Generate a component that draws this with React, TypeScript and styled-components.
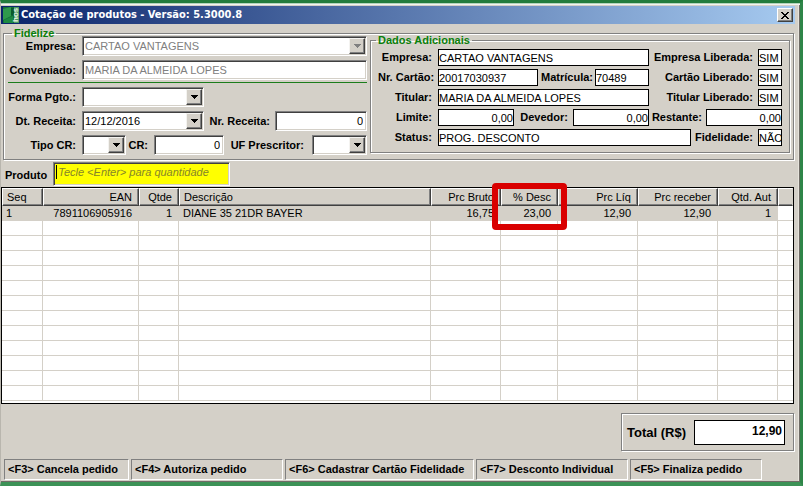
import React from "react";
import styled, { createGlobalStyle, css } from "styled-components";

const face = "#d4d0c8";
const sans = `"Liberation Sans", Arial, sans-serif`;

const GlobalStyle = createGlobalStyle`
  * { box-sizing: border-box; }
  body { margin: 0; background: ${face}; font: 11px/13px ${sans}; color: #000; }
  input, select, button { font: inherit; color: inherit; margin: 0; border-radius: 0; }
`;

const Window = styled.main`
  display: flex;
  flex-direction: column;
  min-height: 100vh;
  background: ${face};
  border-style: solid;
  border-width: 3px 3px 4px 1px;
  border-color: #237c3d #2e8548 #3c9256 #b9b6ae;
  box-shadow: inset 0 1px #b5d5bd, inset 0 2px #f4f3ee, inset -1px -1px #6f6c66, inset -2px 0 #e6e3dc;
  padding: 3px 5px 2px 0;
`;

const TitleBar = styled.header`
  display: flex;
  align-items: center;
  gap: 2px;
  height: 18px;
  padding: 0 2px;
  background: linear-gradient(to right, #0a246a, #a6caf0);
  color: #fff;
`;

const Title = styled.h1`
  flex: 1;
  margin: 0;
  font: bold 11px/14px "DejaVu Sans Condensed", "DejaVu Sans", sans-serif;
`;

const CloseButton = styled.button`
  display: grid;
  place-items: center;
  width: 16px;
  height: 14px;
  padding: 0;
  color: #000;
  background: ${face};
  border: 1px solid;
  border-color: #fff #404040 #404040 #fff;
  box-shadow: inset -1px -1px #808080;
`;

const etched = css`
  border: 1px solid #808080;
  box-shadow: inset 1px 1px #fff, 1px 1px #fff;
`;

const Group = styled.fieldset`
  min-width: 0;
  margin: 0;
  ${etched}
`;

const OuterGroup = styled(Group)`
  display: flex;
  align-items: flex-start;
  gap: 3px;
  margin: 8px 1px 0 2px;
  padding: 2px 3px 4px 4px;
`;

const Legend = styled.legend<{ $left?: number }>`
  height: 2px;
  margin-left: ${(p) => p.$left ?? 4}px;
  padding: 0 2px;
  line-height: 2px;
  font-weight: bold;
  color: #0a800a;
  background: ${face};
`;

const Client = styled.div`
  flex: 0 0 359px;
  width: 359px;
  min-width: 0;
`;

const Row = styled.div<{ $tight?: boolean }>`
  display: flex;
  align-items: center;
  margin-bottom: ${(p) => (p.$tight ? 3 : 4)}px;
  &:last-child { margin-bottom: 0; }
`;

const Rule = styled.hr`
  margin: -2px 0 4px;
  border: 0;
  border-top: 1px solid #1b7d1b;
`;

const Label = styled.label<{ $w: number; $gap?: number }>`
  flex: 0 0 auto;
  width: ${(p) => p.$w}px;
  margin-right: ${(p) => p.$gap ?? 6}px;
  text-align: right;
  font-weight: bold;
  white-space: nowrap;
`;

const size = css<{ $w?: number }>`
  ${(p) => (p.$w ? `flex: 0 0 ${p.$w}px; width: ${p.$w}px;` : "flex: 1 1 0; width: 0;")}
  min-width: 0;
`;

const sunken = css`
  background: #fff;
  border: 1px solid;
  border-color: #808080 #fff #fff #808080;
  box-shadow: inset 1px 1px #404040, inset -1px -1px ${face};
`;

const Field = styled.input<{ $w?: number; $right?: boolean }>`
  ${size}
  ${sunken}
  height: 20px;
  padding: 0 3px 1px 2px;
  text-align: ${(p) => (p.$right ? "right" : "left")};
  &:disabled { color: #808080; }
`;

const FlatField = styled.input<{ $w?: number; $right?: boolean }>`
  ${size}
  height: 17px;
  padding: 0;
  background: #fff;
  border: 1px solid #000;
  text-align: ${(p) => (p.$right ? "right" : "left")};
`;

const Combo = styled.span<{ $w?: number }>`
  ${size}
  ${sunken}
  position: relative;
  height: 20px;
`;

const ComboSelect = styled.select`
  appearance: none;
  display: block;
  width: 100%;
  height: 18px;
  padding: 0 18px 0 2px;
  background: transparent;
  border: 0;
  &:disabled { color: #808080; opacity: 1; }
`;

const ComboArrow = styled.span<{ $off?: boolean }>`
  position: absolute;
  top: 1px;
  right: 1px;
  bottom: 1px;
  display: grid;
  place-items: center;
  width: 16px;
  color: ${(p) => (p.$off ? "#808080" : "#000")};
  background: ${face};
  border: 1px solid;
  border-color: #f4f3f0 #404040 #404040 #f4f3f0;
  box-shadow: inset -1px -1px #808080;
  pointer-events: none;
`;

const Extra = styled(Group)`
  flex: 1;
  margin-top: 3px;
  padding: 8px 7px 6px;
`;

const ProductRow = styled.div`
  display: flex;
  align-items: center;
  gap: 6px;
  padding: 2px 4px 1px;
`;

const ProductLabel = styled.label`
  padding-top: 2px;
  font-weight: bold;
`;

const ProductBox = styled.span`
  position: relative;
  width: 177px;
  &::before {
    content: "";
    position: absolute;
    left: 3px;
    top: 3px;
    width: 1px;
    height: 14px;
    background: #000;
  }
`;

const ProductInput = styled.input`
  ${sunken}
  display: block;
  width: 100%;
  height: 24px;
  padding: 0 4px 5px;
  background: #ff0;
  &::placeholder { color: #85852a; font-style: italic; opacity: 1; }
`;

const GridFrame = styled.div`
  margin-right: 1px;
  padding-bottom: 2px;
  background: #fff;
  border: 1px solid #000;
`;

const Table = styled.table`
  width: 100%;
  table-layout: fixed;
  border-collapse: separate;
  border-spacing: 0;
`;

const Col = styled.col<{ $w?: number }>`
  ${(p) => (p.$w ? `width: ${p.$w}px;` : "")}
`;

const Th = styled.th<{ $left?: boolean }>`
  position: relative;
  height: 18px;
  padding: 0 6px 0 4px;
  text-align: ${(p) => (p.$left ? "left" : "right")};
  font-weight: normal;
  white-space: nowrap;
  background: ${face};
  border: 1px solid;
  border-color: #fff #404040 #404040 #fff;
  box-shadow: inset -1px -1px #808080;
  &:last-child { border-right-color: ${face}; box-shadow: inset 0 -1px #808080; }
`;

const Td = styled.td<{ $left?: boolean }>`
  height: 15px;
  padding: 1px 6px 0 4px;
  line-height: 13px;
  text-align: ${(p) => (p.$left ? "left" : "right")};
  white-space: nowrap;
  border-right: 1px solid ${face};
  border-bottom: 1px solid ${face};
  &:last-child { border-right: 0; }
`;

const Tr = styled.tr<{ $selected?: boolean }>`
  ${(p) => p.$selected && css`
    ${Td}:not(:last-child) { background: ${face}; }
  `}
`;

const Highlight = styled.span`
  position: absolute;
  top: -6px;
  left: -10px;
  width: 75px;
  height: 47px;
  z-index: 1;
  border: 6px solid #d90000;
  border-radius: 4px;
  pointer-events: none;
`;

const TotalBox = styled.section`
  display: flex;
  align-items: center;
  align-self: flex-end;
  gap: 8px;
  margin: 9px 1px 8px 0;
  padding: 6px 8px 5px 5px;
  ${etched}
`;

const TotalLabel = styled.label`
  font-size: 13px;
  line-height: 16px;
  font-weight: bold;
`;

const TotalInput = styled.input`
  width: 91px;
  height: 25px;
  padding: 0 2px 4px;
  background: #fff;
  border: 1px solid #000;
  text-align: right;
  font-size: 12px;
  font-weight: bold;
`;

const StatusBar = styled.footer`
  display: flex;
  gap: 2px;
  margin-top: auto;
  padding-left: 3px;
`;

const StatusButton = styled.button<{ $w: number }>`
  width: ${(p) => p.$w}px;
  height: 21px;
  padding: 0 3px;
  text-align: left;
  white-space: nowrap;
  font-weight: bold;
  background: ${face};
  border: 1px solid;
  border-color: #808080 #fff #fff #808080;
`;

const columns: { name: string; w?: number; left?: boolean; value: string }[] = [
  { name: "Seq", w: 41, left: true, value: "1" },
  { name: "EAN", w: 96, value: "7891106905916" },
  { name: "Qtde", w: 40, value: "1" },
  { name: "Descrição", left: true, value: "DIANE 35 21DR BAYER" },
  { name: "Prc Bruto", w: 70, value: "16,75" },
  { name: "% Desc", w: 57, value: "23,00" },
  { name: "Prc Líq", w: 80, value: "12,90" },
  { name: "Prc receber", w: 80, value: "12,90" },
  { name: "Qtd. Aut", w: 60, value: "1" },
  { name: "", w: 15, value: "" },
];

const commands = [
  { text: "<F3> Cancela pedido", w: 125 },
  { text: "<F4> Autoriza pedido", w: 152 },
  { text: "<F6> Cadastrar Cartão Fidelidade", w: 189 },
  { text: "<F7> Desconto Individual", w: 152 },
  { text: "<F5> Finaliza pedido", w: 132 },
];

const Logo = () => (
  <svg width="16" height="16" viewBox="0 0 16 16" aria-hidden="true">
    <rect width="16" height="16" fill="#14713a" />
    <path d="M0 2 8 0v9l-8 4z" fill="#2f9a4c" />
    <path d="M8 1h3v8L8 8z" fill="#0b5a2c" />
    <path d="M1 13 10 9v7H1z" fill="#1d8a42" />
    <rect x="11" width="5" height="16" fill="#4c9a64" />
    <text transform="translate(15 15) rotate(-90)" fontFamily="Liberation Sans" fontSize="8" fontWeight="bold" fill="#eaf5e6">hos</text>
  </svg>
);

function Select({ id, w, value = "", disabled }: { id: string; w?: number; value?: string; disabled?: boolean }) {
  return (
    <Combo $w={w}>
      <ComboSelect id={id} defaultValue={value} disabled={disabled}>
        <option value={value}>{value}</option>
      </ComboSelect>
      <ComboArrow $off={disabled}>
        <svg width="7" height="4" viewBox="0 0 7 4" aria-hidden="true" shapeRendering="crispEdges">
          <path d="M0 0h7v1H6v1H5v1H4v1H3V3H2V2H1V1H0z" fill="currentColor" />
        </svg>
      </ComboArrow>
    </Combo>
  );
}

export default function App() {
  return (
    <>
      <GlobalStyle />
      <Window>
        <TitleBar>
          <Logo />
          <Title>Cotação de produtos - Versão: 5.3000.8</Title>
          <CloseButton aria-label="Fechar">
            <svg width="8" height="7" viewBox="0 0 8 7" aria-hidden="true" shapeRendering="crispEdges">
              <path d="M0 0h2v1h1v1h2V1h1V0h2v1H7v1H6v1H5v1h1v1h1v1h1v1H6V6H5V5H3v1H2v1H0V6h1V5h1V4h1V3H2V2H1V1H0z" fill="currentColor" />
            </svg>
          </CloseButton>
        </TitleBar>

        <OuterGroup>
          <Legend>Fidelize</Legend>
          <Client>
            <Row>
              <Label $w={68} htmlFor="empresa">Empresa:</Label>
              <Select id="empresa" value="CARTAO VANTAGENS" disabled />
            </Row>
            <Row>
              <Label $w={68} htmlFor="conveniado">Conveniado:</Label>
              <Field id="conveniado" defaultValue="MARIA DA ALMEIDA LOPES" disabled />
            </Row>
            <Rule />
            <Row>
              <Label $w={68} htmlFor="forma">Forma Pgto.:</Label>
              <Select id="forma" w={122} />
            </Row>
            <Row>
              <Label $w={68} htmlFor="data">Dt. Receita:</Label>
              <Select id="data" w={122} value="12/12/2016" />
              <Label $w={66} $gap={5} htmlFor="receita">Nr. Receita:</Label>
              <Field id="receita" defaultValue="0" $right />
            </Row>
            <Row>
              <Label $w={68} htmlFor="tipo">Tipo CR:</Label>
              <Select id="tipo" w={44} />
              <Label $w={22} htmlFor="cr">CR:</Label>
              <Field id="cr" $w={70} defaultValue="0" $right />
              <Label $w={80} $gap={8} htmlFor="uf">UF Prescritor:</Label>
              <Select id="uf" />
            </Row>
          </Client>

          <Extra>
            <Legend $left={-2}>Dados Adicionais</Legend>
            <Row $tight>
              <Label $w={54} htmlFor="a-empresa">Empresa:</Label>
              <FlatField id="a-empresa" defaultValue="CARTAO VANTAGENS" />
              <Label $w={104} $gap={5} htmlFor="a-emplib">Empresa Liberada:</Label>
              <FlatField id="a-emplib" $w={24} defaultValue="SIM" />
            </Row>
            <Row $tight>
              <Label $w={54} htmlFor="a-cartao">Nr. Cartão:</Label>
              <FlatField id="a-cartao" defaultValue="20017030937" />
              <Label $w={55} $gap={2} htmlFor="a-matricula">Matrícula:</Label>
              <FlatField id="a-matricula" $w={54} defaultValue="70489" />
              <Label $w={104} $gap={5} htmlFor="a-carlib">Cartão Liberado:</Label>
              <FlatField id="a-carlib" $w={24} defaultValue="SIM" />
            </Row>
            <Row $tight>
              <Label $w={54} htmlFor="a-titular">Titular:</Label>
              <FlatField id="a-titular" defaultValue="MARIA DA ALMEIDA LOPES" />
              <Label $w={104} $gap={5} htmlFor="a-titlib">Titular Liberado:</Label>
              <FlatField id="a-titlib" $w={24} defaultValue="SIM" />
            </Row>
            <Row $tight>
              <Label $w={54} htmlFor="a-limite">Limite:</Label>
              <FlatField id="a-limite" defaultValue="0,00" $right />
              <Label $w={54} $gap={5} htmlFor="a-devedor">Devedor:</Label>
              <FlatField id="a-devedor" $w={76} defaultValue="0,00" $right />
              <Label $w={53} $gap={4} htmlFor="a-restante">Restante:</Label>
              <FlatField id="a-restante" $w={76} defaultValue="0,00" $right />
            </Row>
            <Row $tight>
              <Label $w={54} htmlFor="a-status">Status:</Label>
              <FlatField id="a-status" defaultValue="PROG. DESCONTO" />
              <Label $w={62} $gap={5} htmlFor="a-fidelidade">Fidelidade:</Label>
              <FlatField id="a-fidelidade" $w={24} defaultValue="NÃO" />
            </Row>
          </Extra>
        </OuterGroup>

        <ProductRow>
          <ProductLabel htmlFor="produto">Produto</ProductLabel>
          <ProductBox>
            <ProductInput id="produto" placeholder="Tecle <Enter> para quantidade" />
          </ProductBox>
        </ProductRow>

        <GridFrame>
          <Table>
            <colgroup>
              {columns.map((c, i) => <Col key={i} $w={c.w} />)}
            </colgroup>
            <thead>
              <tr>
                {columns.map((c, i) => (
                  <Th key={i} $left={c.left}>
                    {c.name}
                    {c.name === "% Desc" && <Highlight />}
                  </Th>
                ))}
              </tr>
            </thead>
            <tbody>
              <Tr $selected>
                {columns.map((c, i) => <Td key={i} $left={c.left}>{c.value}</Td>)}
              </Tr>
              {Array.from({ length: 12 }, (_, r) => (
                <Tr key={r}>
                  {columns.map((c, i) => <Td key={i} />)}
                </Tr>
              ))}
            </tbody>
          </Table>
        </GridFrame>

        <TotalBox>
          <TotalLabel htmlFor="total">Total (R$)</TotalLabel>
          <TotalInput id="total" defaultValue="12,90" />
        </TotalBox>

        <StatusBar>
          {commands.map((c) => (
            <StatusButton key={c.text} $w={c.w}>{c.text}</StatusButton>
          ))}
        </StatusBar>
      </Window>
    </>
  );
}
